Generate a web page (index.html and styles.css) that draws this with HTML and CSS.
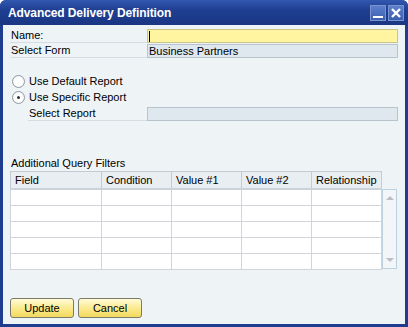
FILE: index.html
```html
<!DOCTYPE html>
<html lang="en">
<head>
  <meta charset="UTF-8" />
  <title>Advanced Delivery Definition</title>
  <link rel="stylesheet" href="styles.css">
</head>
<body>
  <div class="window">
    <div class="titlebar">
      <span class="title">Advanced Delivery Definition</span>
      <div class="title-buttons">
        <span class="tbtn"><svg width="14" height="14" viewBox="0 0 14 14"><rect x="2" y="10" width="10" height="2" fill="#fff"/></svg></span>
        <span class="tbtn"><svg width="14" height="14" viewBox="0 0 14 14"><path d="M3 3 L11 11 M11 3 L3 11" stroke="#fff" stroke-width="2.4"/></svg></span>
      </div>
    </div>
    <div class="content">
      <div class="field-row">
        <label class="label">Name:</label>
        <div class="input active"><span class="caret"></span></div>
      </div>
      <div class="field-row">
        <label class="label">Select Form</label>
        <div class="input readonly">Business Partners</div>
      </div>

      <div class="radios">
        <div class="radio-row"><span class="radio"></span>Use Default Report</div>
        <div class="radio-row"><span class="radio checked"></span>Use Specific Report</div>
        <div class="field-row sub">
          <label class="label">Select Report</label>
          <div class="input readonly"></div>
        </div>
      </div>

      <div class="section-title">Additional Query Filters</div>
      <div class="grid-wrap">
        <table class="grid">
          <tr><th class="c1">Field</th><th class="c2">Condition</th><th class="c3">Value #1</th><th class="c4">Value #2</th><th class="c5">Relationship</th></tr>
          <tr><td></td><td></td><td></td><td></td><td></td></tr>
          <tr><td></td><td></td><td></td><td></td><td></td></tr>
          <tr><td></td><td></td><td></td><td></td><td></td></tr>
          <tr><td></td><td></td><td></td><td></td><td></td></tr>
          <tr><td></td><td></td><td></td><td></td><td></td></tr>
        </table>
        <div class="scrollbar">
          <span class="arrow up"></span>
          <span class="arrow down"></span>
        </div>
      </div>

      <div class="buttons">
        <button class="btn">Update</button>
        <button class="btn">Cancel</button>
      </div>
    </div>
  </div>
</body>
</html>
```

FILE: styles.css
```css
body {
  margin: 0;
  font-family: "Liberation Sans", Arial, sans-serif;
  font-size: 11px;
  color: #000;
  background: #fff;
}
.window {
  width: 408px;
  height: 327px;
  box-sizing: border-box;
  background: #1f3d8e;
  border-radius: 6px 6px 0 0;
  padding: 0 3px 3px 3px;
  display: flex;
  flex-direction: column;
}
.titlebar {
  height: 25px;
  display: flex;
  align-items: center;
  justify-content: space-between;
  background: linear-gradient(#3158b0, #1f3f91 40%, #1a3684);
  margin: 0 -3px;
  padding: 0 4px 0 8px;
  border-radius: 6px 6px 0 0;
}
.title {
  color: #fff;
  font-weight: bold;
  font-size: 12px;
  letter-spacing: -0.1px;
}
.title-buttons {
  display: flex;
  gap: 2px;
}
.tbtn {
  width: 16px;
  height: 16px;
  border: 1px solid #7b93cc;
  background: linear-gradient(#5b7fcb, #3b5fb0);
  display: flex;
  align-items: center;
  justify-content: center;
  box-sizing: border-box;
}
.content {
  flex: 1;
  background: #eef3f6;
  padding: 4px 7px 0 7px;
  display: flex;
  flex-direction: column;
}
.field-row {
  display: flex;
  height: 14px;
  align-items: stretch;
  margin-bottom: 1px;
}
.label {
  width: 136px;
  padding-left: 1px;
  border-bottom: 1px solid #d5dde3;
  line-height: 13px;
}
.input {
  flex: 1;
  border: 1px solid #b9c3cc;
  box-sizing: border-box;
  line-height: 12px;
  padding-left: 1px;
}
.input.active {
  background: #fff4a0;
  border-color: #c9c48a;
}
.caret {
  display: inline-block;
  width: 1px;
  height: 11px;
  margin-top: 1px;
  background: #000;
}
.input.readonly {
  background: #dfe7ef;
}
.radios {
  margin-top: 14px;
}
.radio-row {
  display: flex;
  align-items: center;
  height: 16px;
  gap: 4px;
  margin-left: 2px;
}
.radio {
  width: 11px;
  height: 11px;
  border: 1px solid #8f9aa5;
  border-radius: 50%;
  background: radial-gradient(#ffffff 50%, #e4e8ec);
  display: flex;
  align-items: center;
  justify-content: center;
}
.radio.checked::after {
  content: "";
  width: 3px;
  height: 3px;
  border-radius: 50%;
  background: #333;
}
.field-row.sub {
  margin-top: 2px;
}
.field-row.sub .label {
  width: 118px;
  margin-left: 18px;
  padding-left: 1px;
}
.section-title {
  margin-top: 35px;
  height: 14px;
  padding-left: 1px;
}
.grid-wrap {
  display: flex;
  align-items: flex-start;
}
.grid {
  border-collapse: collapse;
  background: #fff;
  table-layout: fixed;
  border: 1px solid #b6c4d0;
}
.grid th {
  height: 16px;
  background: #e9eef2;
  font-weight: normal;
  text-align: left;
  padding: 0 0 0 4px;
  border: 1px solid #c4ccd3;
  border-bottom: 2px solid #c9d3db;
}
.grid td {
  height: 15px;
  padding: 0;
  border: 1px solid #cfd5da;
}
.c1 { width: 86px; }
.c2 { width: 65px; }
.c3 { width: 65px; }
.c4 { width: 65px; }
.c5 { width: 65px; }
.scrollbar {
  margin-top: 18px;
  width: 15px;
  height: 80px;
  border: 1px solid #bcd0e0;
  background: #f3f6f8;
  display: flex;
  flex-direction: column;
  justify-content: space-between;
  align-items: center;
  padding: 6px 0;
  box-sizing: border-box;
}
.arrow {
  width: 0;
  height: 0;
  border-left: 4px solid transparent;
  border-right: 4px solid transparent;
}
.arrow.up { border-bottom: 4px solid #b8bec4; }
.arrow.down { border-top: 4px solid #b8bec4; }
.buttons {
  margin-top: 28px;
  display: flex;
  gap: 4px;
  padding-left: 0;
}
.btn {
  width: 64px;
  height: 20px;
  font-family: "Liberation Sans", Arial, sans-serif;
  font-size: 11px;
  border: 1px solid #7c7a68;
  border-radius: 3px;
  background: linear-gradient(#fffbd6, #fbe98a 55%, #f2d85e);
  padding: 0;
}
```
